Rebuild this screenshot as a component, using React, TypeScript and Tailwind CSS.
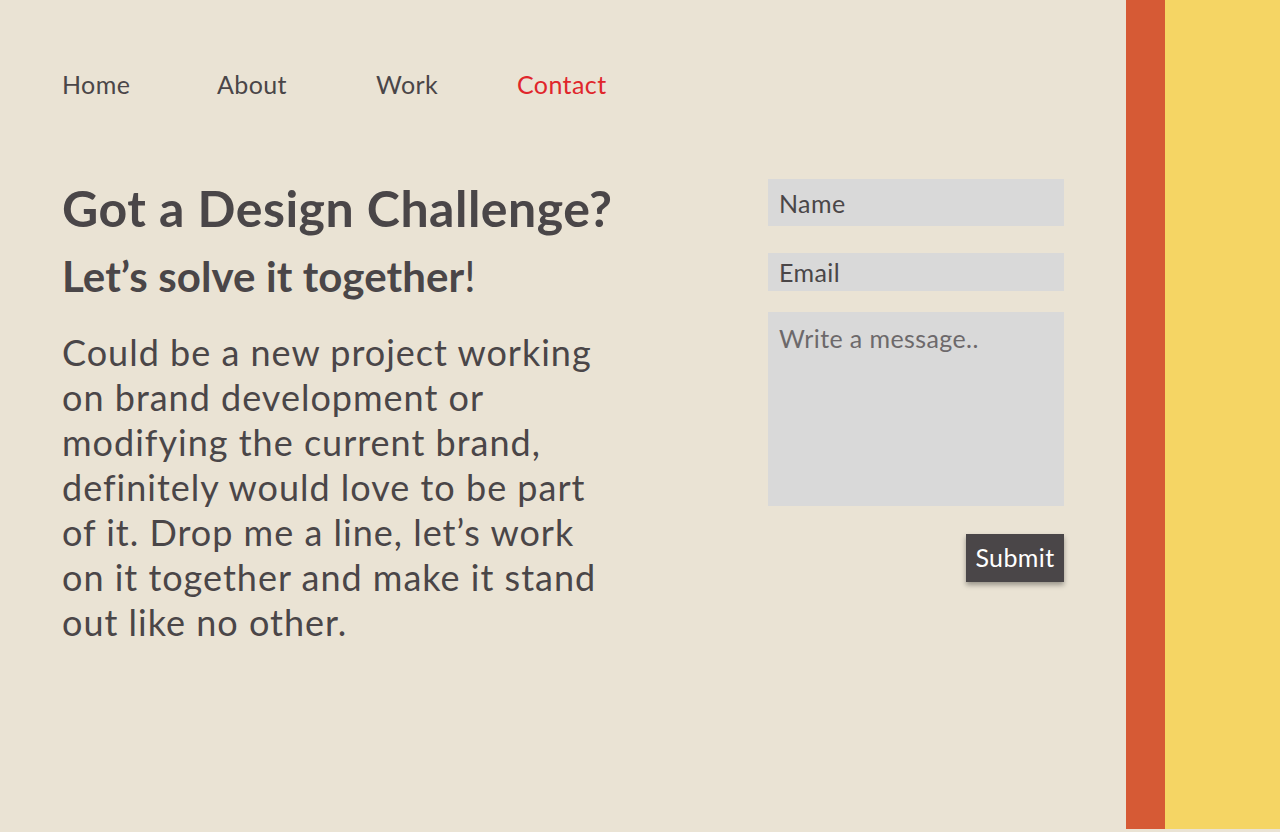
import { useState } from "react";

const navItems = [
  { label: "Home", width: "w-[155px]" },
  { label: "About", width: "w-[159px]" },
  { label: "Work", width: "w-[141px]" },
  { label: "Contact", width: "" },
];

export default function App() {
  const [form, setForm] = useState({ name: "", email: "", message: "" });

  const handleChange = (e) => {
    const { name, value } = e.target;
    setForm((prev) => ({ ...prev, [name]: value }));
  };

  return (
    <div className="flex h-[832px] w-full bg-[#eae3d4] font-['Lato',sans-serif] text-[#4a4648]">
      <main className="flex-1 pl-[62px] pt-[67px]">
        <nav className="flex items-center text-[25px] leading-[34px] tracking-[0.4px]">
          {navItems.map((item) => (
            <a
              key={item.label}
              href="#"
              className={`${item.width} ${item.label === "Contact" ? "text-[#e0262b]" : "text-[#4a4648]"}`}
            >
              {item.label}
            </a>
          ))}
        </nav>

        <div className="mt-[78px] flex">
          <section className="w-[543px] shrink-0">
            <h1 className="-mt-[3px] whitespace-nowrap text-[50px] font-bold leading-[64px] tracking-[0.5px]">
              Got a Design Challenge?
            </h1>
            <h2 className="mt-[10px] whitespace-nowrap text-[42px] font-bold leading-[52px] tracking-[0.1px]">
              Let’s solve it together<span className="font-normal">!</span>
            </h2>
            <p className="mt-[28px] text-[36px] leading-[45px] tracking-[1px]">
              Could be a new project working on brand development or modifying the current brand, definitely would
              love to be part of it. Drop me a line, let’s work on it together and make it stand out like no other.
            </p>
          </section>

          <form className="ml-[163px] flex w-[296px] flex-col" onSubmit={(e) => e.preventDefault()}>
            <input
              name="name"
              value={form.name}
              onChange={handleChange}
              placeholder="Name"
              className="h-[47px] bg-[#d9d9d9] px-[11px] text-[25px] tracking-[0.4px] outline-none placeholder:text-[#4a4648]"
            />
            <input
              name="email"
              value={form.email}
              onChange={handleChange}
              placeholder="Email"
              className="mt-[27px] h-[38px] bg-[#d9d9d9] px-[11px] text-[25px] tracking-[0.4px] outline-none placeholder:text-[#4a4648]"
            />
            <textarea
              name="message"
              value={form.message}
              onChange={handleChange}
              placeholder="Write a message.."
              className="mt-[21px] h-[194px] resize-none bg-[#d9d9d9] px-[11px] py-[10px] text-[25px] leading-[32px] tracking-[0.4px] outline-none placeholder:text-[#6d696b]"
            />
            <button
              type="submit"
              className="mt-[28px] h-[48px] w-[98px] self-end bg-[#4a4648] text-[25px] tracking-[0.4px] text-white shadow-[0_3px_5px_rgba(0,0,0,0.35)]"
            >
              Submit
            </button>
          </form>
        </div>
      </main>

      <div className="h-[829px] w-[39px] bg-[#d65a35]" />
      <div className="h-[829px] w-[115px] bg-[#f5d564]" />
    </div>
  );
}
